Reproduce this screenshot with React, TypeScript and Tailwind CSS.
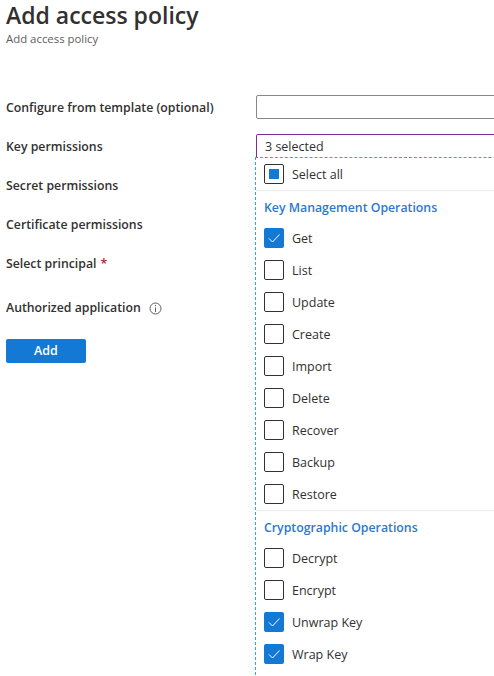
const keyOps: [string, boolean][] = [
  ["Get", true],
  ["List", false],
  ["Update", false],
  ["Create", false],
  ["Import", false],
  ["Delete", false],
  ["Recover", false],
  ["Backup", false],
  ["Restore", false],
];
const cryptoOps: [string, boolean][] = [
  ["Decrypt", false],
  ["Encrypt", false],
  ["Unwrap Key", true],
  ["Wrap Key", true],
];

function Check({ label, checked }: { label: string; checked: boolean }) {
  return (
    <div className="flex h-[32px] items-center pl-[8px]">
      {checked ? (
        <span className="flex h-[20px] w-[20px] items-center justify-center rounded-[2px] bg-[#1379d4]">
          <svg width="14" height="14" viewBox="0 0 14 14" fill="none" stroke="#ffffff" strokeWidth="1">
            <path d="M2 7.5 L5.5 11 L12.5 3.5" />
          </svg>
        </span>
      ) : (
        <span className="h-[20px] w-[20px] rounded-[2px] border border-[#323130] bg-white" />
      )}
      <span className="ml-[8px] pt-[2px] text-[12.5px] text-[#323130]">{label}</span>
    </div>
  );
}

function Label({ children, h }: { children: React.ReactNode; h: string }) {
  return <div className={`flex items-center font-semibold text-[12.3px] text-[#323130] ${h}`}>{children}</div>;
}

export default function App() {
  return (
    <div className="h-[676px] w-[494px] overflow-hidden bg-white pl-[6px] font-['Open_Sans','Noto_Sans',sans-serif]">
      <h1 className="h-[30px] text-[23px] font-semibold leading-[30px] text-[#323130]">Add access policy</h1>
      <p className="mt-[1px] h-[16px] text-[11.4px] leading-[16px] text-[#605e5c]">Add access policy</p>
      <div className="mt-[48px] flex items-start">
        <div className="w-[250px] shrink-0">
          <div className="pt-[1px]">
            <Label h="h-[24px]">Configure from template (optional)</Label>
            <Label h="h-[39px] mt-[8px]">Key permissions</Label>
            <Label h="h-[39px]">Secret permissions</Label>
            <Label h="h-[39px]">Certificate permissions</Label>
            <Label h="h-[39px]">
              Select principal <span className="ml-[4px] text-[#a4262c]">*</span>
            </Label>
            <Label h="h-[49px]">
              Authorized application
              <svg className="ml-[8px]" width="13" height="13" viewBox="0 0 13 13" fill="none" stroke="#605e5c" strokeWidth="1">
                <circle cx="6.5" cy="6.5" r="5.5" />
                <path d="M6.5 5.5V10M6.5 3V4.2" />
              </svg>
            </Label>
          </div>
          <button className="mt-[6px] h-[24px] w-[80px] rounded-[2px] bg-[#1379d4] text-[12.5px] font-semibold text-white">
            Add
          </button>
        </div>
        <div className="w-[300px] shrink-0">
          <div className="h-[24px] rounded-[2px] border border-[#8a8886] bg-white" />
          <div className="mt-[15px] flex h-[23px] items-center rounded-t-[2px] border border-b-0 border-[#7c2d9b] pl-[8px] pt-[2px] text-[12.5px] text-[#323130]">
            3 selected
          </div>
          <div className="-ml-[1px] border-l border-t border-dashed border-[#29a9e0] pb-[20px]">
            <div className="flex h-[33px] items-center border-b border-[#edebe9] pl-[8px]">
              <span className="flex h-[20px] w-[20px] items-center justify-center rounded-[2px] border border-[#323130]">
                <span className="h-[10px] w-[10px] bg-[#1379d4]" />
              </span>
              <span className="ml-[8px] pt-[2px] text-[12.5px] text-[#323130]">Select all</span>
            </div>
            <div className="flex h-[31px] items-center pl-[8px] pt-[3px] text-[12.3px] font-semibold text-[#2b79d0]">Key Management Operations</div>
            {keyOps.map(([l, c]) => (
              <Check key={l} label={l} checked={c} />
            ))}
            <div className="border-b border-[#edebe9]" />
            <div className="flex h-[31px] items-center pl-[8px] pt-[3px] text-[12.3px] font-semibold text-[#2b79d0]">Cryptographic Operations</div>
            {cryptoOps.map(([l, c]) => (
              <Check key={l} label={l} checked={c} />
            ))}
          </div>
        </div>
      </div>
    </div>
  );
}
